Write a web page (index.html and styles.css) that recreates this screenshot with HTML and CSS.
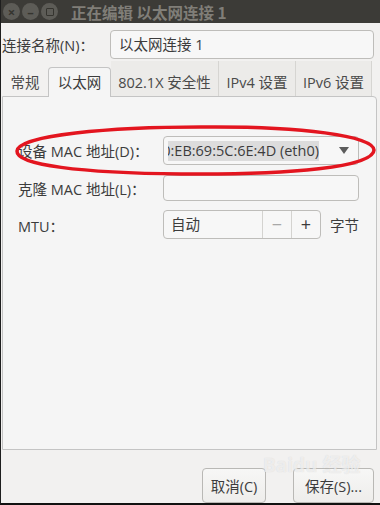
FILE: index.html
```html
<!DOCTYPE html>
<html lang="zh-CN">
<head>
    <meta charset="UTF-8">
    <title>正在编辑 以太网连接 1</title>
    <link rel="stylesheet" href="styles.css">
</head>
<body>
    <div class="window">
        <div class="titlebar">
            <span class="wbtn">&#215;</span>
            <span class="wbtn">&#8211;</span>
            <span class="wbtn"><i class="sq"></i></span>
            <span class="title">正在编辑 以太网连接 1</span>
        </div>

        <div class="content">
            <div class="name-row">
                <label class="name-label">连接名称(N)：</label>
                <div class="entry name-entry">以太网连接 1</div>
            </div>

            <div class="notebook">
                <div class="tabs">
                    <div class="tab first">常规</div>
                    <div class="tab active">以太网</div>
                    <div class="tab">802.1X 安全性</div>
                    <div class="tab">IPv4 设置</div>
                    <div class="tab last">IPv6 设置</div>
                </div>
                <div class="pane">
                    <div class="form">
                        <label>设备 MAC 地址(D)：</label>
                        <div class="entry combo">
                            <div class="combo-text"><span class="sel">0:EB:69:5C:6E:4D (eth0)</span></div>
                            <span class="arrow"></span>
                        </div>

                        <label>克隆 MAC 地址(L)：</label>
                        <div class="entry clone"></div>

                        <label>MTU：</label>
                        <div class="mtu">
                            <div class="entry spin">
                                <span class="spin-val">自动</span>
                                <span class="spin-btn minus">&#8722;</span>
                                <span class="spin-btn plus">+</span>
                            </div>
                            <span class="unit">字节</span>
                        </div>
                    </div>
                </div>
            </div>

            <div class="actions">
                <button class="btn cancel">取消(C)</button>
                <button class="btn save">保存(S)...</button>
            </div>
        </div>

        <!-- marker drawn over the screenshot -->
        <svg class="circle-mark" width="380" height="60" viewBox="0 0 380 60">
            <path d="M200 3 C300 2 373 12 373 26 C373 43 290 51 180 50 C80 49 15 41 16 27 C17 11 110 3 200 3 Z"
                  fill="none" stroke="#e3151f" stroke-width="3.5"/>
        </svg>
        <div class="watermark">Baidu 经验</div>
    </div>
</body>
</html>
```

FILE: styles.css
```css
* {
    box-sizing: border-box;
}

body {
    margin: 0;
    font-family: "Open Sans", "Noto Sans CJK SC", sans-serif;
    font-size: 14.5px;
    color: #3c3c3c;
    background: #f2f1f0;
}

.window {
    position: relative;
    width: 380px;
    height: 505px;
    background: #f2f1f0;
    border-left: 1px solid #1e1e1e;
    border-bottom: 2px solid #111;
    overflow: hidden;
}

.titlebar {
    height: 23px;
    background: #3c3b37;
    display: flex;
    align-items: center;
    padding-left: 2px;
    gap: 2px;
}

.wbtn {
    width: 17px;
    height: 17px;
    border-radius: 50%;
    background: #5d5c57;
    color: #35342f;
    font-size: 13px;
    display: flex;
    align-items: center;
    justify-content: center;
    font-weight: bold;
}

.sq {
    width: 8px;
    height: 8px;
    border: 1.5px solid #35342f;
    border-radius: 1px;
}

.title {
    margin-left: 11px;
    color: #807e78;
    font-weight: bold;
    font-size: 15.5px;
    font-family: "Noto Sans CJK SC", sans-serif;
}

.content {
    padding: 7px 0 0 1px;
}

.name-row {
    display: flex;
    align-items: center;
    padding-right: 6px;
}

.name-label {
    width: 108px;
    white-space: nowrap;
}

.entry {
    border: 1px solid #bebdba;
    border-radius: 4px;
    background: #f7f7f7;
}

.name-entry {
    flex: 1;
    height: 29px;
    padding-left: 8px;
    line-height: 27px;
}

.notebook {
    margin-top: 2px;
    margin-right: 3px;
}

.tabs {
    display: flex;
    align-items: flex-end;
    height: 35px;
}

.tab {
    height: 35px;
    padding-top: 9px;
    line-height: 26px;
    text-align: center;
    white-space: nowrap;
    background: #ecebe9;
    border-right: 1px solid #d6d5d2;
    color: #4a4a4a;
}

.tab.first {
    width: 46px;
    background: #f2f1f0;
    border-right: none;
}

.tab.active {
    width: 63px;
    height: 30px;
    padding-top: 2px;
    background: #f5f5f5;
    border: 1px solid #c4c4c4;
    border-bottom: none;
    border-radius: 4px 4px 0 0;
    margin-bottom: -1px;
    position: relative;
    color: #3c3c3c;
}

.tab:nth-child(3) {
    width: 108px;
}

.tab:nth-child(4) {
    width: 77px;
}

.tab.last {
    width: 76px;
}

.pane {
    height: 354px;
    background: #f5f5f5;
    border: 1px solid #c4c4c4;
    border-radius: 0 4px 0 0;
    padding: 39px 15px 0 15px;
}

.form {
    display: grid;
    grid-template-columns: 145px 196px;
    align-items: center;
    row-gap: 10px;
}

.form label {
    white-space: nowrap;
}

.combo {
    height: 29px;
    display: flex;
    align-items: center;
    padding: 0 9px 0 4px;
}

.combo-text {
    width: 151px;
    overflow: hidden;
    display: flex;
    justify-content: flex-end;
}

.sel {
    white-space: nowrap;
    background: #dcdcdc;
    line-height: 20px;
}

.arrow {
    margin-left: auto;
    width: 0;
    height: 0;
    border-left: 5px solid transparent;
    border-right: 5px solid transparent;
    border-top: 7px solid #5c5c5c;
}

.clone {
    height: 26px;
}

.mtu {
    display: flex;
    align-items: center;
    margin-top: -1px;
}

.spin {
    width: 161px;
    height: 29px;
    display: flex;
    align-items: stretch;
}

.spin-val {
    flex: 1;
    padding-left: 7px;
    line-height: 27px;
}

.spin-btn {
    width: 29px;
    text-align: center;
    border-left: 1px solid #d4d3d0;
    line-height: 26px;
    font-size: 18px;
}

.minus {
    color: #a8a8a8;
}

.plus {
    color: #3c3c3c;
}

.unit {
    margin-left: 9px;
    white-space: nowrap;
}

.actions {
    display: flex;
    justify-content: flex-end;
    gap: 27px;
    padding: 18px 6px 0 0;
}

.btn {
    height: 35px;
    border: 1px solid #b9b8b5;
    border-radius: 4px;
    background: linear-gradient(#f7f7f6, #eeedeb);
    font-family: "Open Sans", "Noto Sans CJK SC", sans-serif;
    font-size: 14.5px;
    color: #3c3c3c;
    padding: 0;
}

.cancel {
    width: 64px;
}

.save {
    width: 81px;
}

.circle-mark {
    position: absolute;
    left: 0;
    top: 124px;
}

.watermark {
    position: absolute;
    left: 262px;
    top: 450px;
    font-size: 19px;
    font-weight: bold;
    color: rgba(255, 255, 255, 0.6);
    text-shadow: 0 0 1px rgba(160, 160, 160, 0.4);
}
```
